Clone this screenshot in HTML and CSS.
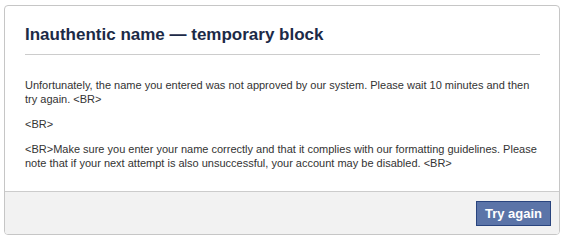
FILE: index.html
```html
<!DOCTYPE html>
<html lang="en">
<head>
    <meta charset="UTF-8">
    <title>Inauthentic name</title>
    <link rel="stylesheet" href="styles.css">
</head>
<body>
    <div class="dialog">
        <div class="dialog-body">
            <h2 class="dialog-title">Inauthentic name — temporary block</h2>
            <div class="dialog-content">
                <p>Unfortunately, the name you entered was not approved by our system. Please wait 10 minutes and then try again. &lt;BR&gt;</p>
                <p>&lt;BR&gt;</p>
                <p>&lt;BR&gt;Make sure you enter your name correctly and that it complies with our formatting guidelines. Please note that if your next attempt is also unsuccessful, your account may be disabled. &lt;BR&gt;</p>
            </div>
        </div>
        <div class="dialog-footer">
            <button class="btn-confirm">Try again</button>
        </div>
    </div>
</body>
</html>
```

FILE: styles.css
```css
body {
    margin: 0;
    background-color: #ffffff;
    font-family: Tahoma, "Liberation Sans", Arial, sans-serif;
    font-size: 11px;
    color: #333333;
}

.dialog {
    width: 554px;
    margin: 5px 0 0 4px;
    border: 1px solid #c6c6c6;
    border-radius: 4px;
    overflow: hidden;
}

.dialog-body {
    padding: 19px 19px 10px 20px;
}

.dialog-title {
    margin: 0;
    padding-bottom: 9px;
    border-bottom: 1px solid #cccccc;
    font-size: 17px;
    line-height: 20px;
    color: #1c2a47;
}

.dialog-content {
    padding-top: 23px;
}

.dialog-content p {
    margin: 0 0 11px;
    line-height: 14px;
}

.dialog-footer {
    display: flex;
    justify-content: flex-end;
    padding: 9px 8px 8px;
    background-color: #f2f2f2;
    border-top: 1px solid #cccccc;
}

.btn-confirm {
    height: 25px;
    padding: 0 8px;
    font-family: Tahoma, "Liberation Sans", Arial, sans-serif;
    font-size: 13px;
    font-weight: bold;
    color: #ffffff;
    background-color: #5b74a8;
    border: 1px solid #29447e;
    border-radius: 0;
    cursor: pointer;
}
```
